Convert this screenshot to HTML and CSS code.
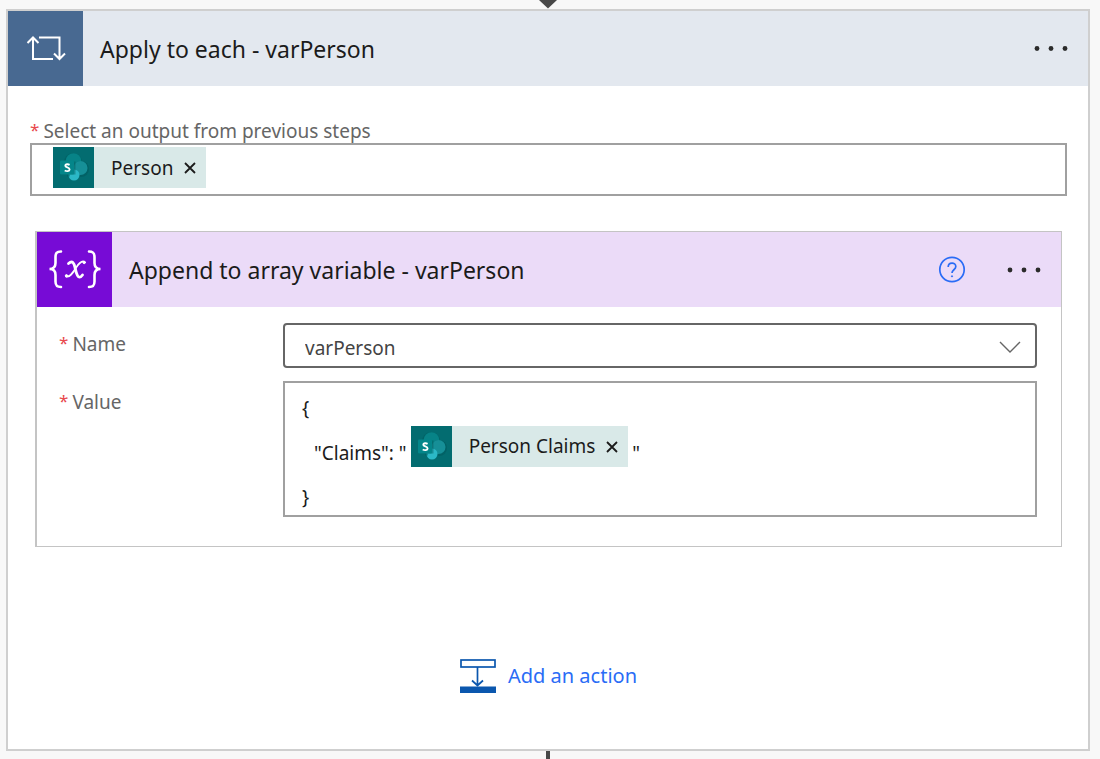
FILE: index.html
```html
<!DOCTYPE html>
<html lang="en">
<head>
<meta charset="utf-8">
<title>Apply to each - varPerson</title>
<link rel="stylesheet" href="styles.css">
</head>
<body>
<svg width="0" height="0" class="sprite" aria-hidden="true">
  <symbol id="sharepoint" viewBox="0 0 41 41">
    <rect width="41" height="41" fill="#036c70"/>
    <circle cx="20" cy="15" r="9" fill="#02585c" opacity=".45"/>
    <circle cx="20.500" cy="14" r="7.800" fill="#078387"/>
    <circle cx="28" cy="22" r="8" fill="#02585c" opacity=".5"/>
    <circle cx="27.500" cy="21" r="7" fill="#168f97"/>
    <circle cx="21" cy="28" r="5.500" fill="#2bb8c6"/>
    <path d="M7.500 14.500h15v13h-5.500v2h-3v-2h-6.500z" fill="#02585c" opacity=".45"/>
    <rect x="7" y="13.500" width="14" height="14" rx="1" fill="#04868a"/>
    <path d="M16.600 17.800c-1.500-.8-4.300-.9-4.300 1 0 2 4.300 1.300 4.300 3.600 0 2.200-3.200 2-4.900 1.100" fill="none" stroke="#fff" stroke-width="1.900"/>
  </symbol>
</svg>
<main class="canvas">
  <div class="connector">
    <svg width="20" height="9" viewBox="0 0 20 9" aria-hidden="true"><path d="M1 0h18l-9 8.500z" fill="#484848"/></svg>
  </div>
  <section class="card loop">
    <header class="head head-loop">
      <span class="tile tile-loop">
        <svg width="40" height="30" viewBox="0 0 40 30" fill="none" stroke="#fff" stroke-width="2" aria-hidden="true">
          <path d="M7 3.500V25h20M13 3.500h20.500V24M1.500 9L7 3.500 12.500 9M28 19.500l5.500 5.500 5.500-5.500"/>
        </svg>
      </span>
      <h1 class="title">Apply to each - varPerson</h1>
      <button class="icon-btn" type="button" aria-label="More options">
        <svg width="36" height="8" viewBox="0 0 36 8" fill="#2b2b2b" aria-hidden="true"><circle cx="4" cy="3.500" r="2.400"/><circle cx="18" cy="3.500" r="2.400"/><circle cx="32" cy="3.500" r="2.400"/></svg>
      </button>
    </header>
    <div class="loop-body">
      <div class="label" id="output-label"><span class="req">*</span>Select an output from previous steps</div>
      <div class="box output" role="textbox" tabindex="0" aria-labelledby="output-label">
        <span class="token">
          <svg class="token-icon" aria-hidden="true"><use href="#sharepoint"/></svg>
          <span>Person</span>
          <button class="remove" type="button" aria-label="Remove Person"><svg width="12" height="12" viewBox="0 0 12 12" stroke="#1b1b1b" stroke-width="1.800" aria-hidden="true"><path d="M1 1l10 10M11 1L1 11"/></svg></button>
        </span>
      </div>
      <section class="card append">
        <header class="head head-append">
          <span class="tile tile-append">
            <svg width="56" height="42" viewBox="0 0 56 42" fill="none" stroke="#fff" stroke-linecap="round" aria-hidden="true">
              <path stroke-width="2.600" d="M14 2.500C9.500 2.500 8.500 4.500 8.500 8v6c0 4-1.500 6-6 6 4.500 0 6 2 6 6v6.500c0 3.500 1 5.500 5.500 5.500M42 2.500c4.500 0 5.500 2 5.500 5.500v6c0 4 1.500 6 6 6-4.500 0-6 2-6 6v6.500c0 3.500-1 5.500-5.500 5.500"/>
              <path stroke-width="2.800" d="M21.500 14.500c4-3.500 5.500-.5 6.500 4s2.800 14 7.500 7.500"/>
              <path stroke-width="1.800" d="M37.500 12.800c-3-1.300-5.500 1.200-8.500 6s-6 10-10 8.500"/>
              <circle cx="37.200" cy="13.500" r="1.200" fill="#fff"/><circle cx="19.500" cy="26.800" r="1.200" fill="#fff"/>
            </svg>
          </span>
          <h2 class="title">Append to array variable - varPerson</h2>
          <button class="icon-btn help" type="button" aria-label="Help">
            <svg width="28" height="28" viewBox="0 0 28 28" fill="none" stroke="#2a6cf6" stroke-width="1.700" aria-hidden="true"><circle cx="14" cy="13.500" r="12.200"/><path d="M10.200 10.900c0-5 7.600-5 7.600-.4 0 3.200-3.800 3.300-3.800 6.500"/><circle cx="14" cy="20.300" r=".6" fill="#2a6cf6" stroke-width="1"/></svg>
          </button>
          <button class="icon-btn" type="button" aria-label="More options">
            <svg width="36" height="8" viewBox="0 0 36 8" fill="#2b2b2b" aria-hidden="true"><circle cx="4" cy="4" r="2.400"/><circle cx="18" cy="4" r="2.400"/><circle cx="32" cy="4" r="2.400"/></svg>
          </button>
        </header>
        <div class="fields">
          <label class="label" for="name"><span class="req">*</span>Name</label>
          <div class="select-wrap">
            <select class="select" id="name"><option>varPerson</option></select>
            <svg class="chevron" width="22" height="14" viewBox="0 0 22 14" fill="none" stroke="#666" stroke-width="1.400" aria-hidden="true"><path d="M1 3l10 10L21 3"/></svg>
          </div>
          <div class="label" id="value-label"><span class="req">*</span>Value</div>
          <div class="box value" role="textbox" tabindex="0" aria-multiline="true" aria-labelledby="value-label">
            <div class="line">{</div>
            <div class="line line-token">
              <span>"Claims": "</span>
              <span class="token">
                <svg class="token-icon" aria-hidden="true"><use href="#sharepoint"/></svg>
                <span>Person Claims</span>
                <button class="remove" type="button" aria-label="Remove Person Claims"><svg width="12" height="12" viewBox="0 0 12 12" stroke="#1b1b1b" stroke-width="1.800" aria-hidden="true"><path d="M1 1l10 10M11 1L1 11"/></svg></button>
              </span>
              <span>"</span>
            </div>
            <div class="line">}</div>
          </div>
        </div>
      </section>
      <button class="add" type="button">
        <svg width="36" height="34" viewBox="0 0 36 34" fill="none" stroke="#0b57ae" stroke-width="1.700" aria-hidden="true"><rect x="1" y="1" width="34" height="7"/><path d="M17.500 8v18.500M12 21.500l5.500 5 5.500-5"/><path d="M0 27.500h36V34H0z" fill="#0b57ae" stroke="none"/></svg>
        <span>Add an action</span>
      </button>
    </div>
  </section>
  <div class="connector"><span class="stem"></span></div>
</main>
</body>
</html>
```
FILE: styles.css
```css
* { box-sizing: border-box; }

body {
  margin: 0;
  background: #f8f8f8;
  color: #1b1b1b;
  font: 19px/28px "Noto Sans", "Open Sans", sans-serif;
}

button {
  padding: 0;
  border: 0;
  background: none;
  color: inherit;
  font: inherit;
  cursor: pointer;
}

svg { display: block; flex: none; }
.sprite { position: absolute; }

.canvas { padding: 0 10px 0 6px; }
.connector { display: flex; justify-content: center; height: 9px; }
.connector:last-child { height: 8px; }
.stem { width: 4px; background: #484848; }

.card { background: #fff; }
.loop { border: 2px solid #cfcfcf; }
.append {
  margin: 35px 5px 0;
  border: 1px solid #c4c4c4;
  border-left-width: 2px;
}

.head {
  display: flex;
  align-items: center;
  height: 75px;
  padding-right: 19px;
}
.head-loop { background: #e3e8ef; }
.head-append { background: #ebdbf8; }

.tile {
  display: grid;
  place-items: center;
  flex: none;
  width: 75px;
  height: 75px;
}
.tile-loop { background: #486991; }
.tile-append { background: #770bd6; }

.title {
  flex: 1;
  margin: 0 0 0 17px;
  font-size: 23px;
  font-weight: 400;
}
.icon-btn { flex: none; }
.help { margin-right: 40px; }

.loop-body { padding: 34px 21px 56px 22px; }

.label {
  display: flex;
  gap: 4px;
  color: #666;
  line-height: 23px;
}
.req { color: #e8484c; font-size: 17px; line-height: 20px; }

.box { border: 2px solid #a0a0a0; background: #fff; }
.output { height: 53px; padding: 2px 21px; }

.token {
  display: inline-flex;
  align-items: center;
  height: 41px;
  padding-right: 10px;
  background: #d9e9e8;
}
.token-icon { width: 41px; height: 41px; margin-right: 17px; }
.remove { margin-left: 11px; }

.fields {
  display: grid;
  grid-template-columns: 224px 1fr;
  row-gap: 13px;
  padding: 16px 24px 29px 22px;
}
.fields .label { padding-top: 10px; }

.select-wrap { display: grid; align-items: center; position: relative; }
.select {
  width: 100%;
  height: 45px;
  padding: 4px 20px 0;
  border: 2px solid #666;
  border-radius: 4px;
  background: #fff;
  color: #444;
  font: inherit;
  appearance: none;
}
.chevron { position: absolute; right: 16px; pointer-events: none; }

.value { padding: 10px 17px 3px; }
.line { line-height: 30px; }
.line-token {
  display: flex;
  align-items: flex-end;
  gap: 4px;
  margin: 3px 0 15px;
  padding-left: 12px;
  line-height: 27px;
}

.add {
  display: flex;
  align-items: center;
  gap: 12px;
  margin: 112px auto 0;
  color: #2a6cf6;
  font-size: 20px;
}
```
